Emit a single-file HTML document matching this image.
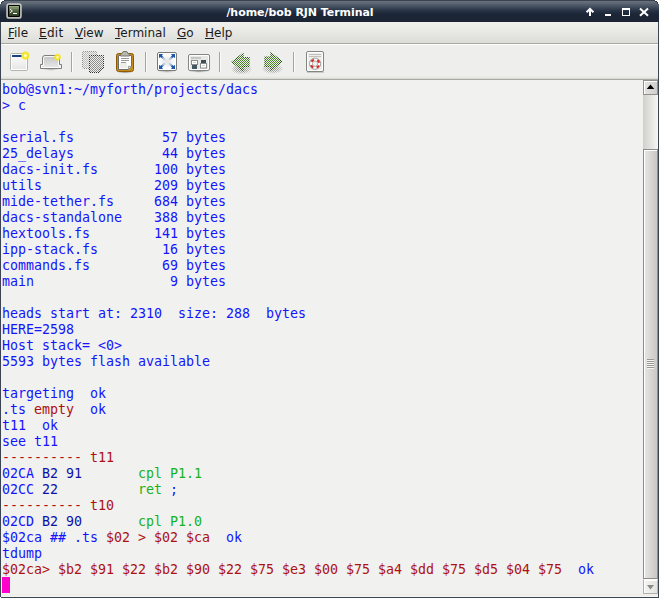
<!DOCTYPE html>
<html><head><meta charset="utf-8"><title>/home/bob RJN Terminal</title>
<style>
html,body{margin:0;padding:0;}
body{width:659px;height:598px;overflow:hidden;background:#fff;position:relative;font-family:"DejaVu Sans","Liberation Sans",sans-serif;}
#win{position:absolute;left:0;top:0;width:659px;height:598px;background:#3b4451;overflow:hidden;}
#title{position:absolute;left:0;top:0;width:659px;height:22px;background:linear-gradient(to bottom,#3b4350 0px,#3b4350 1px,#68717e 1px,#646d7a 2px,#5b6572 3.5px,#4c5765 5.5px,#3d4959 7.5px,#2f3b4c 9.5px,#243041 11.5px,#1d2939 13.5px,#1b2535 15px,#1b2535 22px);}
#title .t{position:absolute;left:24px;width:552px;top:5px;letter-spacing:-0.05px;text-align:center;color:#fff;font-weight:bold;font-size:11px;line-height:15px;}
#menu{position:absolute;left:1px;top:22px;width:657px;height:21px;background:linear-gradient(to bottom,#f0f0ed 0px,#e8e8e5 10px,#dcdcd8 21px);}
#menub{position:absolute;left:1px;top:43px;width:657px;height:1px;background:#a9a9a1;}
#menu span{position:absolute;top:3px;font-size:12px;line-height:16px;color:#1a1a1a;}
#tool{position:absolute;left:1px;top:44px;width:657px;height:36px;background:linear-gradient(to bottom,#eeeeec 0px,#eeeeec 31px,#e3e3e0 33px,#d2d2ce 34px);border-top:1px solid #ffffff;border-bottom:1px solid #a9a7a0;box-sizing:border-box;}
#term{position:absolute;left:1px;top:80px;width:642px;height:514px;background:#f1f1ef;}
#below{position:absolute;left:1px;top:594px;width:657px;height:3px;background:#eeeeec;border-bottom:1px solid #f4f4f1;box-sizing:border-box;}
#text{position:absolute;left:1px;top:2px;font-family:"DejaVu Sans Mono","Liberation Mono",monospace;font-size:13.3px;letter-spacing:-0.0055px;line-height:16px;}
.ln{height:16px;white-space:pre;}
.b{color:#1414fd}.n{color:#0f0fa8}.r{color:#ad1111}.g{color:#18b218}
.c{background:#ff00cc;display:inline-block;width:8px;height:16px;position:relative;top:-1px;vertical-align:top;}
#sb{position:absolute;left:643px;top:80px;width:15px;height:514px;background:linear-gradient(to right,#cfcfcb 0px,#e2e2df 7px,#f6f6f4 15px);}
#thumb{position:absolute;left:0;top:69px;width:15px;height:430px;box-sizing:border-box;border:1px solid #8f8b87;background:linear-gradient(to right,#ffffff 0px,#ffffff 1px,#e6e4e2 1px,#cac8c4 13px);box-shadow:inset 0 1px #fff;}
.sbtn{position:absolute;left:0;width:15px;height:15px;box-sizing:border-box;border:1px solid #938f8b;background:linear-gradient(to right,#ffffff 0px,#ffffff 1px,#e4e2e0 1px,#d0cecb 13px);box-shadow:inset 0 1px #fff;}
#ov{position:absolute;left:0;top:0;}
</style></head><body>
<div id="win">
<div id="title"><div class="t">/home/bob RJN Terminal</div></div>
<div id="menu"><span style="left:7px"><u>F</u>ile</span><span style="left:38px;letter-spacing:0.3px"><u>E</u>dit</span><span style="left:74px"><u>V</u>iew</span><span style="left:114px"><u>T</u>erminal</span><span style="left:176px"><u>G</u>o</span><span style="left:204px"><u>H</u>elp</span></div>
<div id="menub"></div>
<div id="tool"></div>
<div id="term"><div id="text">
<div class="ln"><span class="b">bob@svn1:~/myforth/projects/dacs</span></div>
<div class="ln"><span class="b">&gt; c</span></div>
<div class="ln"></div>
<div class="ln"><span class="b">serial.fs           57 bytes</span></div>
<div class="ln"><span class="b">25_delays           44 bytes</span></div>
<div class="ln"><span class="b">dacs-init.fs       100 bytes</span></div>
<div class="ln"><span class="b">utils              209 bytes</span></div>
<div class="ln"><span class="b">mide-tether.fs     684 bytes</span></div>
<div class="ln"><span class="b">dacs-standalone    388 bytes</span></div>
<div class="ln"><span class="b">hextools.fs        141 bytes</span></div>
<div class="ln"><span class="b">ipp-stack.fs        16 bytes</span></div>
<div class="ln"><span class="b">commands.fs         69 bytes</span></div>
<div class="ln"><span class="b">main                 9 bytes</span></div>
<div class="ln"></div>
<div class="ln"><span class="b">heads start at: 2310  size: 288  bytes</span></div>
<div class="ln"><span class="b">HERE=2598</span></div>
<div class="ln"><span class="b">Host stack= &lt;0&gt;</span></div>
<div class="ln"><span class="b">5593 bytes flash available</span></div>
<div class="ln"></div>
<div class="ln"><span class="b">targeting  ok</span></div>
<div class="ln"><span class="b">.ts </span><span class="r">empty</span><span class="b">  ok</span></div>
<div class="ln"><span class="b">t11  ok</span></div>
<div class="ln"><span class="b">see t11</span></div>
<div class="ln"><span class="r">---------- t11</span></div>
<div class="ln"><span class="b">02CA </span><span class="n">B2 91</span><span class="b">       </span><span class="g">cpl P1.1</span></div>
<div class="ln"><span class="b">02CC </span><span class="n">22</span><span class="b">          </span><span class="g">ret </span><span class="b">;</span></div>
<div class="ln"><span class="r">---------- t10</span></div>
<div class="ln"><span class="b">02CD </span><span class="n">B2 90</span><span class="b">       </span><span class="g">cpl P1.0</span></div>
<div class="ln"><span class="b">$02ca ## .ts </span><span class="r">$02 &gt; $02 $ca</span><span class="b">  ok</span></div>
<div class="ln"><span class="b">tdump</span></div>
<div class="ln"><span class="r">$02ca&gt; $b2 $91 $22 $b2 $90 $22 $75 $e3 $00 $75 $a4 $dd $75 $d5 $04 $75</span><span class="b">  ok</span></div>
<div class="ln"><span class="c"> </span></div>
</div></div>
<div id="sb"><div class="sbtn" style="top:0"></div><div id="thumb"></div><div class="sbtn" style="top:499px;border-color:#fbfbfa #bab8b2 #b2b0aa #b2b0aa;background:linear-gradient(to right,#ffffff 0px,#ffffff 1px,#f3f3f1 1px,#e3e3df 13px);"></div></div>
<div id="below"></div>
<svg id="ov" width="659" height="598" viewBox="0 0 659 598">
<defs>
<pattern id="ck" width="2" height="2" patternUnits="userSpaceOnUse"><rect x="0" y="0" width="1" height="1" fill="#fff"/><rect x="1" y="1" width="1" height="1" fill="#fff"/></pattern>
<mask id="st" maskUnits="userSpaceOnUse" x="0" y="0" width="659" height="598"><rect x="0" y="0" width="659" height="598" fill="url(#ck)"/></mask>
<linearGradient id="gWin" x1="0" y1="0" x2="0" y2="1"><stop offset="0" stop-color="#ffffff"/><stop offset="1" stop-color="#e4e4e4"/></linearGradient>
<linearGradient id="gTab" x1="0" y1="0" x2="0" y2="1"><stop offset="0" stop-color="#c2c2c2"/><stop offset="1" stop-color="#ebebeb"/></linearGradient>
<radialGradient id="glow"><stop offset="0" stop-color="#ffffff"/><stop offset="0.2" stop-color="#fffbd0"/><stop offset="0.4" stop-color="#f7ea2a"/><stop offset="0.75" stop-color="#f2e21a" stop-opacity="0.8"/><stop offset="1" stop-color="#f2e21a" stop-opacity="0"/></radialGradient>
<linearGradient id="gTerm" x1="0" y1="0" x2="0" y2="1"><stop offset="0" stop-color="#a2b98c"/><stop offset="0.2" stop-color="#6c8059"/><stop offset="0.6" stop-color="#465938"/><stop offset="1" stop-color="#2a3820"/></linearGradient>
<radialGradient id="gFs"><stop offset="0" stop-color="#e2e2e2"/><stop offset="1" stop-color="#ffffff"/></radialGradient>
<radialGradient id="shad"><stop offset="0" stop-color="#000" stop-opacity="0.35"/><stop offset="1" stop-color="#000" stop-opacity="0"/></radialGradient>
<linearGradient id="fadeTL" x1="0" y1="0" x2="1" y2="1"><stop offset="0" stop-color="#2058a8"/><stop offset="1" stop-color="#2058a8" stop-opacity="0"/></linearGradient>
<radialGradient id="shad2"><stop offset="0" stop-color="#000" stop-opacity="0.5"/><stop offset="0.6" stop-color="#000" stop-opacity="0.28"/><stop offset="1" stop-color="#000" stop-opacity="0"/></radialGradient>
</defs>

<!-- title icon -->
<rect x="7.1" y="4.1" width="13.8" height="13.8" rx="2" fill="#000" stroke="#d6d8ce" stroke-opacity="0.88" stroke-width="1.7"/>
<rect x="9" y="6" width="10" height="10" fill="url(#gTerm)"/>
<rect x="9" y="8" width="10" height="1" fill="#fff" fill-opacity="0.12"/>
<polyline points="10,9.2 12.4,11 10,12.8" fill="none" stroke="#fff" stroke-opacity="0.9" stroke-width="1"/>
<rect x="13" y="13" width="4" height="1" fill="#fff"/>

<!-- window buttons -->
<g stroke="#fff" stroke-width="2" fill="none">
<polyline points="586.6,12.2 590,8.8 593.4,12.2" stroke-linejoin="miter"/>
<line x1="590" y1="9.5" x2="590" y2="16"/>
<line x1="640" y1="8.5" x2="648" y2="15.7"/>
<line x1="648" y1="8.5" x2="640" y2="15.7"/>
</g>
<rect x="605" y="14" width="6" height="2" fill="#fff"/>
<rect x="622" y="8" width="8" height="2" fill="#fff"/>
<rect x="622.5" y="9.5" width="7" height="6" fill="none" stroke="#fff"/>

<!-- toolbar separators -->
<g shape-rendering="crispEdges">
<rect x="71" y="52" width="1" height="20" fill="#a5a59f"/><rect x="72" y="52" width="1" height="20" fill="#fbfbfa"/>
<rect x="145" y="52" width="1" height="20" fill="#a5a59f"/><rect x="146" y="52" width="1" height="20" fill="#fbfbfa"/>
<rect x="219" y="52" width="1" height="20" fill="#a5a59f"/><rect x="220" y="52" width="1" height="20" fill="#fbfbfa"/>
<rect x="293" y="52" width="1" height="20" fill="#a5a59f"/><rect x="294" y="52" width="1" height="20" fill="#fbfbfa"/>
</g>

<!-- icon1: new window -->
<rect x="10.5" y="53.5" width="17" height="17" rx="1.5" fill="url(#gWin)" stroke="#b2b4ae"/>
<rect x="11.5" y="54.5" width="15" height="15" fill="none" stroke="#fff"/>
<rect x="12" y="55" width="10" height="2" fill="#15428b"/>
<circle cx="25.4" cy="55.6" r="4.8" fill="url(#glow)"/>

<!-- icon2: new tab -->
<ellipse cx="51" cy="69.5" rx="8" ry="1.3" fill="url(#shad)" opacity="0.6"/>
<path d="M42.5,64.5 V58 Q42.5,55.5 45,55.5 H57 Q59.5,55.5 59.5,58 V64.5 H61.5 V68.5 H40.5 V64.5 Z" fill="url(#gTab)" stroke="#7e7e7a"/>
<path d="M43.5,65.5 V58.2 Q43.5,56.5 45.2,56.5 H56.800 Q58.5,56.5 58.5,58.2 V65.5 H60.5 V67.5 H41.5 V65.5 Z" fill="none" stroke="#fff" stroke-opacity="0.85"/>
<circle cx="57.5" cy="57.2" r="3.9" fill="url(#glow)"/>

<!-- icon3: copy (stippled) -->
<g mask="url(#st)">
<rect x="82.5" y="51.5" width="14" height="17" rx="1" fill="#bcbcbc" stroke="#8e8e8e"/>
<path d="M89.5,55.5 H103.5 V68.5 L99.5,72.5 H89.5 Z" fill="#8e8e8e" stroke="#2e2e2e"/>
<path d="M103.5,68.5 L99.5,72.5 L100,69 Z" fill="#666" stroke="#3a3a3a"/>
</g>

<!-- icon4: paste -->
<ellipse cx="125" cy="72.3" rx="8" ry="1.4" fill="url(#shad)"/>
<rect x="116.5" y="53.5" width="17" height="18" rx="2" fill="#c98a1c" stroke="#8f5902"/>
<path d="M118.5,55.5 H131.5 V66.5 L128.5,69.5 H118.5 Z" fill="#fff" stroke="#6c6c68"/>
<path d="M131.5,66.5 L128.5,69.5 L128.3,66.3 Z" fill="#e4e4e0" stroke="#8a8a86" stroke-width="0.8"/>
<rect x="120" y="63" width="7" height="5" fill="#ededea"/>
<path d="M120.5,56 V54.700 Q120.5,53.600 122,53.500 Q122.400,51.500 124,51.500 H126 Q127.600,51.500 128,53.500 Q129.500,53.600 129.500,54.700 V56 Z" fill="#b7b7ab" stroke="#74746c"/>
<g stroke="#9a9a94" shape-rendering="crispEdges"><line x1="121" y1="58.5" x2="129" y2="58.5"/><line x1="121" y1="60.5" x2="129" y2="60.5"/><line x1="121" y1="62.5" x2="126" y2="62.5"/></g>

<!-- icon5: fullscreen -->
<ellipse cx="167" cy="71.5" rx="9" ry="1.4" fill="url(#shad)" opacity="0.7"/>
<rect x="157.5" y="52.5" width="19" height="18" rx="1.5" fill="#fff" stroke="#7b7b78"/>
<rect x="159" y="54" width="16" height="15" fill="url(#gFs)"/>
<g fill="#2058a8">
<path d="M159,54 H163.2 L161.9,55.3 L163,56.4 L161.4,58 L160.3,56.9 L159,58.2 Z"/>
<path d="M175,54 H170.8 L172.1,55.3 L171,56.4 L172.6,58 L173.7,56.9 L175,58.2 Z"/>
<path d="M159,69 H163.2 L161.9,67.7 L163,66.6 L161.4,65 L160.3,66.1 L159,64.8 Z"/>
<path d="M175,69 H170.8 L172.1,67.7 L171,66.600 L172.6,65 L173.7,66.1 L175,64.8 Z"/>
</g>
<g stroke-width="2" fill="none" stroke="#2058a8">
<line x1="162" y1="57" x2="163.300" y2="58.300" stroke-opacity="0.55"/><line x1="163.300" y1="58.300" x2="164.800" y2="59.800" stroke-opacity="0.25"/>
<line x1="172" y1="57" x2="170.700" y2="58.300" stroke-opacity="0.55"/><line x1="170.700" y1="58.300" x2="169.200" y2="59.800" stroke-opacity="0.25"/>
<line x1="162" y1="66" x2="163.300" y2="64.700" stroke-opacity="0.55"/><line x1="163.300" y1="64.700" x2="164.800" y2="63.200" stroke-opacity="0.25"/>
<line x1="172" y1="66" x2="170.700" y2="64.700" stroke-opacity="0.55"/><line x1="170.700" y1="64.700" x2="169.200" y2="63.200" stroke-opacity="0.25"/>
</g>

<!-- icon6: view -->
<ellipse cx="199" cy="71.3" rx="10" ry="1.5" fill="url(#shad)"/>
<rect x="188.500" y="54.5" width="21" height="16" rx="1.5" fill="#fff" stroke="#858583"/>
<rect x="190" y="56" width="18" height="13" fill="#e8e8e6"/>
<rect x="191" y="57" width="10" height="2" fill="#c6c6c4"/>
<rect x="191.5" y="60.5" width="6" height="4" fill="#fff" stroke="#8c8c8a"/>
<rect x="193" y="62" width="3" height="1" fill="#d0d0d0"/>
<rect x="192" y="65" width="5" height="4" fill="#415863"/>
<rect x="201" y="60" width="5" height="4" fill="#3b4f59"/>
<rect x="200.5" y="63.500" width="6" height="4.500" fill="#fff" stroke="#8c8c8a"/>
<rect x="202" y="65" width="3" height="1" fill="#d0d0d0"/>

<!-- icon7/8: back / forward (stippled) -->
<g mask="url(#st)">
<ellipse cx="241.500" cy="69" rx="11" ry="5.500" fill="url(#shad2)"/>
<path d="M232,62 L243,53.500 V57.500 H249 V66.500 H243 V70.500 Z" fill="#4a8527" stroke="#23500c" stroke-width="1.2"/>
<ellipse cx="272.500" cy="68.500" rx="11" ry="5.500" fill="url(#shad2)"/>
<path d="M282,61.500 L271,53 V57 H265 V66.500 H271 V70 Z" fill="#4a8527" stroke="#23500c" stroke-width="1.2"/>
</g>

<!-- icon9: help -->
<rect x="307" y="71.500" width="17" height="1.200" fill="#000" fill-opacity="0.22"/>
<rect x="306.500" y="51.500" width="17" height="20" rx="1.500" fill="#fff" stroke="#83857f"/>
<rect x="308" y="53" width="14" height="17" fill="#eeeeec"/>
<g stroke="#c2c2ba" shape-rendering="crispEdges"><line x1="309" y1="54.500" x2="321" y2="54.500"/><line x1="309" y1="56.500" x2="321" y2="56.500"/></g>
<circle cx="315.100" cy="63.700" r="5.600" fill="#fff" stroke="#8a8c86" stroke-width="0.8"/>
<circle cx="315.100" cy="63.700" r="4.100" fill="none" stroke="#d81414" stroke-opacity="0.9" stroke-width="2.300" stroke-dasharray="3.000 3.440" stroke-dashoffset="-1.720"/>
<circle cx="315.100" cy="63.700" r="2.700" fill="#f1f1ef" stroke="#8a8c86" stroke-width="0.7"/>

<!-- scrollbar arrows -->
<path d="M650.500,84.600 L654.300,89 H646.700 Z" fill="#000"/>
<path d="M650.500,589.400 L654,585 H647 Z" fill="#8a8a86"/>
<g shape-rendering="crispEdges"><rect x="647" y="359" width="7" height="1" fill="#9a9894"/><rect x="647" y="360" width="7" height="1" fill="#f4f4f2"/><rect x="647" y="361" width="7" height="1" fill="#9a9894"/><rect x="647" y="362" width="7" height="1" fill="#f4f4f2"/><rect x="647" y="363" width="7" height="1" fill="#9a9894"/><rect x="647" y="364" width="7" height="1" fill="#f4f4f2"/><rect x="647" y="365" width="7" height="1" fill="#9a9894"/><rect x="647" y="366" width="7" height="1" fill="#f4f4f2"/><rect x="647" y="367" width="7" height="1" fill="#9a9894"/><rect x="647" y="368" width="7" height="1" fill="#f4f4f2"/></g>
<g shape-rendering="crispEdges">
<rect x="0" y="0" width="6" height="1" fill="#2f3a49"/><rect x="0" y="1" width="4" height="1" fill="#2f3a49"/><rect x="0" y="2" width="2" height="2" fill="#2f3a49"/>
<rect x="0" y="0" width="4" height="1" fill="#fff"/><rect x="0" y="1" width="2" height="1" fill="#fff"/><rect x="0" y="2" width="1" height="2" fill="#fff"/>
<rect x="653" y="0" width="6" height="1" fill="#2f3a49"/><rect x="655" y="1" width="4" height="1" fill="#2f3a49"/><rect x="657" y="2" width="2" height="2" fill="#2f3a49"/>
<rect x="655" y="0" width="4" height="1" fill="#fff"/><rect x="657" y="1" width="2" height="1" fill="#fff"/><rect x="658" y="2" width="1" height="2" fill="#fff"/>
<rect x="0" y="597" width="1" height="1" fill="#fff"/>
</g>
</svg>

</div>
</body></html>
